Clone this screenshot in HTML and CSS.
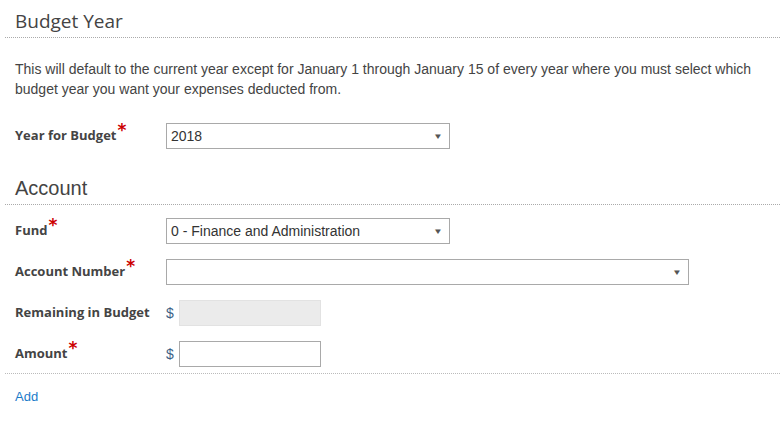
FILE: index.html
```html
<!DOCTYPE html>
<html>
<head>
<meta charset="utf-8">
<link rel="stylesheet" href="styles.css">
</head>
<body>
<div class="page">
  <h2 class="head head-budget">Budget Year</h2>
  <p class="intro">This will default to the current year except for January 1 through January 15 of every year where you must select which budget year you want your expenses deducted from.</p>
  <div class="form-row row-year">
    <label class="label">Year for Budget<span class="req">*</span></label>
    <div class="select short"><span>2018</span><span class="caret">&#9660;</span></div>
  </div>

  <h2 class="head head-account">Account</h2>
  <div class="fields">
    <div class="form-row">
      <label class="label">Fund<span class="req">*</span></label>
      <div class="select short"><span>0 - Finance and Administration</span><span class="caret">&#9660;</span></div>
    </div>
    <div class="form-row">
      <label class="label">Account Number<span class="req">*</span></label>
      <div class="select long"><span></span><span class="caret">&#9660;</span></div>
    </div>
    <div class="form-row">
      <label class="label">Remaining in Budget</label>
      <div class="money"><span class="dollar">$</span><div class="input disabled"></div></div>
    </div>
    <div class="form-row">
      <label class="label">Amount<span class="req">*</span></label>
      <div class="money"><span class="dollar">$</span><div class="input"></div></div>
    </div>
  </div>
  <div class="footer"><a class="add" href="#">Add</a></div>
</div>
</body>
</html>
```

FILE: styles.css
```css
html, body {
  margin: 0;
  padding: 0;
  background: #fff;
}
body {
  font-family: "Liberation Sans", Arial, sans-serif;
  color: #444;
}
.page {
  width: 780px;
  padding-left: 5px;
  box-sizing: border-box;
}
.head {
  margin: 0;
  font-weight: normal;
  color: #444;
  border-bottom: 1px dotted #aaa;
  padding-left: 10px;
}
.head-budget {
  font-family: "Open Sans", sans-serif;
  font-size: 19px;
  line-height: 26px;
  padding-top: 8px;
  padding-bottom: 3px;
}
.head-account {
  font-family: "Liberation Sans", Arial, sans-serif;
  font-size: 20px;
  line-height: 24px;
  margin-top: 27px;
  padding-bottom: 4px;
}
.intro {
  margin: 21px 0 0 0;
  padding-left: 10px;
  padding-right: 10px;
  font-size: 14px;
  line-height: 20px;
  color: #444;
}
.form-row {
  display: flex;
  align-items: center;
  height: 26px;
  padding-left: 10px;
}
.row-year {
  margin-top: 24px;
}
.fields {
  display: flex;
  flex-direction: column;
  gap: 15px;
  margin-top: 13px;
}
.label {
  width: 151px;
  flex: none;
  font-family: "Open Sans", sans-serif;
  font-weight: bold;
  font-size: 13px;
  color: #444;
  position: relative;
  top: -1px;
}
.req {
  color: #c00;
  font-family: "DejaVu Sans", sans-serif;
  font-weight: bold;
  font-size: 17px;
  position: relative;
  top: -4px;
  margin-left: 1px;
  line-height: 0;
}
.select {
  box-sizing: border-box;
  height: 26px;
  border: 1px solid #a9a9a9;
  background: #fff;
  display: flex;
  align-items: center;
  justify-content: space-between;
  padding: 0 6px 0 4px;
  font-size: 14px;
  color: #333;
}
.select.short { width: 284px; }
.select.long { width: 523px; }
.caret {
  font-size: 10px;
  color: #555;
  transform: scaleY(0.8);
}
.money {
  display: flex;
  align-items: center;
}
.dollar {
  width: 13px;
  font-size: 14px;
  color: #3d5f86;
}
.input {
  box-sizing: border-box;
  width: 142px;
  height: 26px;
  border: 1px solid #a9a9a9;
  background: #fff;
}
.input.disabled {
  background: #ebebeb;
  border-color: #e2e2e2;
}
.footer {
  margin-top: 6px;
  border-top: 1px dotted #bbb;
  padding: 13px 10px 0;
}
.add {
  font-size: 13px;
  color: #1a7bc9;
  text-decoration: none;
}
```
